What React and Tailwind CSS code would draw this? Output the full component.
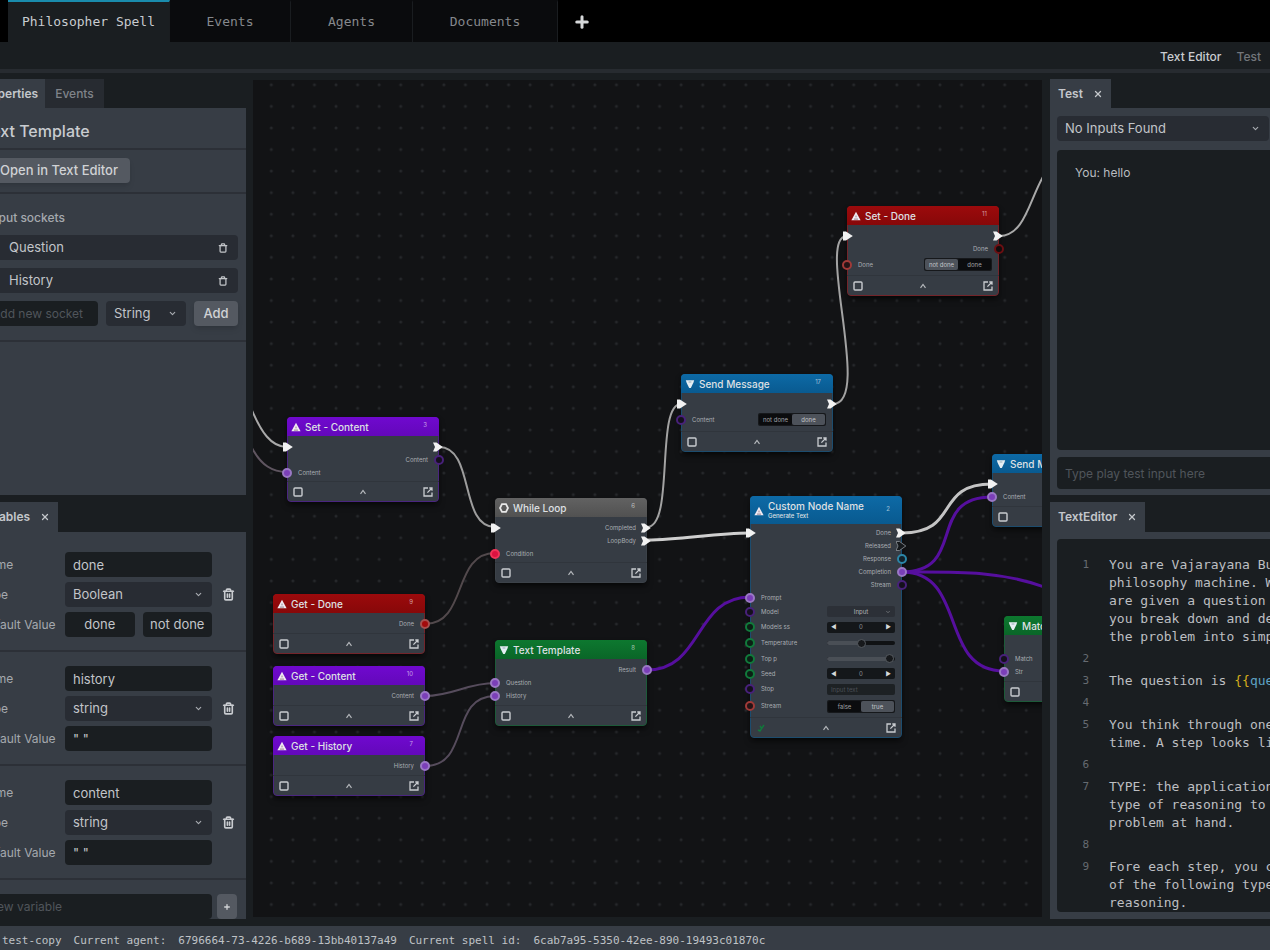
import React, { useState } from 'react';
import { ChevronDown, Plus, Trash, Trash2, X } from 'lucide-react';

const headerColors = {
  purple: 'bg-linear-to-b from-[#7009cf] to-[#6308ba]',
  red: 'bg-linear-to-b from-[#9c0a0c] to-[#870809]',
  grey: 'bg-linear-to-b from-[#626262] to-[#515151]',
  blue: 'bg-linear-to-b from-[#0d6aa6] to-[#095a90]',
  green: 'bg-linear-to-b from-[#0d782f] to-[#0a6628]'
};

const borderColors = {
  purple: 'border-[#4a2580]',
  red: 'border-[#74242a]',
  grey: 'border-[#3c4249]',
  blue: 'border-[#1c4c6e]',
  green: 'border-[#1d5a39]'
};

const socketColors = {
  string: 'border-[#9a78c4] bg-[#7b3fb8]',
  stringEmpty: 'border-[#48217a] bg-[#14101c]',
  bool: 'border-[#a5504f] bg-[#a30a0c]',
  boolOpen: 'border-[#a03a38] bg-[#241416]',
  boolEmpty: 'border-[#6c0f12] bg-[#120c0d]',
  condition: 'border-[#ef3358] bg-[#dc1240]',
  number: 'border-[#117a3b] bg-[#0c1f15]',
  object: 'border-[#2b86a8] bg-[#12222b]'
};

// x / y are positions on the free canvas
const nodes = [
  {
    id: 'set-content', x: 34, y: 337, color: 'purple', icon: 'up', title: 'Set - Content', badge: '3', pad: 'pb-0.5',
    rows: [{ inT: true, outT: true }, { out: 'Content', outS: 'stringEmpty' }, { in: 'Content', inS: 'string' }]
  },
  {
    id: 'while', x: 242, y: 418, color: 'grey', icon: 'ring', title: 'While Loop', badge: '6', pad: 'pb-0.5',
    rows: [{ inT: true, out: 'Completed', outT: true }, { out: 'LoopBody', outT: true }, { in: 'Condition', inS: 'condition' }]
  },
  {
    id: 'send-message', x: 428, y: 294, color: 'blue', icon: 'down', title: 'Send Message', badge: '17', pad: 'pb-0.5',
    rows: [{ inT: true, outT: true }, { in: 'Content', inS: 'stringEmpty', h: 'h-[19px]', toggle: ['not done', 'done'], on: 1 }]
  },
  {
    id: 'set-done', x: 594, y: 126, color: 'red', icon: 'up', title: 'Set - Done', badge: '11', pad: 'pb-px',
    rows: [
      { inT: true, outT: true },
      { out: 'Done', outS: 'boolEmpty' },
      { in: 'Done', inS: 'boolOpen', h: 'h-[19px]', toggle: ['not done', 'done'], on: 0 }
    ]
  },
  {
    id: 'get-done', x: 20, y: 514, color: 'red', icon: 'up', title: 'Get - Done', badge: '9', pad: 'pb-[3px]',
    rows: [{ out: 'Done', outS: 'bool' }]
  },
  {
    id: 'get-content', x: 20, y: 586, color: 'purple', icon: 'up', title: 'Get - Content', badge: '10', pad: 'pb-[3px]',
    rows: [{ out: 'Content', outS: 'string' }]
  },
  {
    id: 'get-history', x: 20, y: 656, color: 'purple', icon: 'up', title: 'Get - History', badge: '7', pad: 'pb-[3px]',
    rows: [{ out: 'History', outS: 'string' }]
  },
  {
    id: 'text-template', x: 242, y: 560, color: 'green', icon: 'down', title: 'Text Template', badge: '8', pad: 'pb-[3px]',
    rows: [{ out: 'Result', outS: 'string' }, { in: 'Question', inS: 'string' }, { in: 'History', inS: 'string' }]
  },
  {
    id: 'custom', x: 497, y: 416, color: 'blue', icon: 'up', title: 'Custom Node Name', subtitle: 'Generate Text', badge: '2',
    pad: 'pb-0.5', done: true,
    rows: [
      { inT: true, out: 'Done', outT: true },
      { out: 'Released', outEmptyT: true },
      { out: 'Response', outS: 'object' },
      { out: 'Completion', outS: 'string' },
      { out: 'Stream', outS: 'stringEmpty' },
      { in: 'Prompt', inS: 'string' },
      { in: 'Model', inS: 'stringEmpty', h: 'h-[15px]', field: 'select' },
      { in: 'Models ss', inS: 'number', h: 'h-4', field: 'stepper' },
      { in: 'Temperature', inS: 'number', h: 'h-4', field: 'slider', value: 50 },
      { in: 'Top p', inS: 'number', h: 'h-[15px]', field: 'slider', value: 98 },
      { in: 'Seed', inS: 'number', h: 'h-[15px]', field: 'stepper' },
      { in: 'Stop', inS: 'stringEmpty', h: 'h-4', field: 'text' },
      { in: 'Stream', inS: 'boolOpen', h: 'h-[18px]', toggle: ['false', 'true'], on: 1 }
    ]
  },
  {
    id: 'send-message-2', x: 739, y: 374, color: 'blue', icon: 'down', title: 'Send Message', badge: '4', pad: 'pb-[3px]',
    rows: [{ inT: true, outT: true }, { in: 'Content', inS: 'string' }]
  },
  {
    id: 'match', x: 751, y: 536, color: 'green', icon: 'down', title: 'Match', badge: '5', pad: 'pb-[3px]',
    rows: [{}, { in: 'Match', inS: 'stringEmpty' }, { in: 'Str', inS: 'string' }]
  }
];

const wires = [
  { d: 'M-2 328 C8 352 18 367 34 367', c: '#a9a9a9', w: 2 },
  { d: 'M-2 366 C8 386 20 392 34 392', c: '#5f5560', w: 2 },
  { d: 'M186 367 C222 367 206 447 242 447', c: '#9d9d9d', w: 2 },
  { d: 'M394 447 C422 447 402 324 428 324', c: '#a3a3a3', w: 2 },
  { d: 'M394 460 C430 460 460 453 497 453', c: '#cfcfcf', w: 3 },
  { d: 'M580 324 C620 324 562 156 594 156', c: '#a3a3a3', w: 2 },
  { d: 'M746 156 C772 156 776 120 791 95', c: '#a9a9a9', w: 2 },
  { d: 'M172 544 C215 544 199 473 242 473', c: '#52494c', w: 2 },
  { d: 'M172 616 C200 616 214 603 242 603', c: '#564c5c', w: 2 },
  { d: 'M172 686 C218 686 196 616 242 616', c: '#564c5c', w: 2 },
  { d: 'M394 590 C450 590 441 517 497 517', c: '#560f9e', w: 3 },
  { d: 'M649 453 C708 453 680 404 739 404', c: '#c4c4c4', w: 3 },
  { d: 'M649 492 C715 492 672 417 739 417', c: '#560f9e', w: 3 },
  { d: 'M649 492 C700 492 745 490 791 507', c: '#560f9e', w: 3 },
  { d: 'M649 492 C715 492 685 591 751 591', c: '#560f9e', w: 3 }
];

const editorLines = [
  ['You are Vajarayana Buddhist', 'philosophy machine. When you', 'are given a question or task', 'you break down and decompose', 'the problem into simple steps'],
  [''],
  ['question'],
  [''],
  ['You think through one step at a', 'time. A step looks like this:'],
  [''],
  ['TYPE: the application of one', 'type of reasoning to the', 'problem at hand.'],
  [''],
  ['Fore each step, you can use one', 'of the following types of', 'reasoning.']
];

function Trigger({ side, empty }) {
  return (
    <svg
      viewBox="0 0 10 10"
      className={side === 'in' ? 'absolute top-1/2 -left-1 size-[10px] -translate-y-1/2' : 'absolute top-1/2 -right-1 size-[10px] -translate-y-1/2'}
    >
      <path
        d={side === 'in' ? 'M0 0.5 L3 0.5 L9.8 5 L3 9.5 L0 9.5 Z' : 'M0 0.5 L3.5 0.5 L9.8 5 L3.5 9.5 L0 9.5 L2 5 Z'}
        fill={empty ? '#16191c' : '#f2f2f2'}
        stroke={empty ? '#777c82' : 'none'}
      />
    </svg>
  );
}

function Socket({ side, type }) {
  return (
    <span
      className={`absolute top-1/2 size-[10px] -translate-y-1/2 rounded-full border-2 ${side === 'in' ? '-left-[5px]' : '-right-[5px]'} ${socketColors[type]}`}
    />
  );
}

function NodeIcon({ type }) {
  if (type === 'ring') {
    return (
      <svg viewBox="0 0 10 10" className="size-[10px] shrink-0" fill="none" stroke="#e8e8e8" strokeWidth="1.8">
        <path d="M3 1.2 H7 L9 5 L7 8.8 H3 L1 5 Z" />
      </svg>
    );
  }
  if (type === 'down') {
    return (
      <svg viewBox="0 0 10 10" className="size-[10px] shrink-0">
        <path d="M0.8 1.2 H9.2 L8.4 3.8 L5.8 9 H4.2 L1.6 3.8 Z" fill="#e4eef3" />
        <path d="M3.6 3 H6.4" stroke="#7f98a2" strokeWidth="0.8" />
      </svg>
    );
  }
  return (
    <svg viewBox="0 0 10 10" className="size-[10px] shrink-0">
      <path d="M5 0.8 L9.6 9.2 H0.4 Z" fill="#f0eaf2" />
      <path d="M5 4.6 V6.4 M3 8.1 H7" stroke="#8d7580" strokeWidth="0.9" />
    </svg>
  );
}

function Field({ row }) {
  if (row.toggle) {
    return (
      <div className="ml-auto flex h-[13px] w-[68px] rounded-xs bg-[#16181b] p-px">
        {row.toggle.map((t, i) => (
          <button key={t} className={`flex-1 rounded-xs text-[6px] leading-[11px] ${row.on === i ? 'bg-[#4d525a] text-[#c3c6ca]' : 'bg-[#0b0c0e] text-[#a0a3a7]'}`}>
            {t}
          </button>
        ))}
      </div>
    );
  }
  if (row.field === 'select') {
    return (
      <div className="relative ml-auto h-[11px] w-[68px]">
        <select aria-label={row.in} className="block h-full w-full appearance-none rounded-xs bg-[#2c3037] text-center text-[6px] text-[#b0b3b8]">
          <option>Input</option>
        </select>
        <ChevronDown className="pointer-events-none absolute top-[3px] right-1 size-[6px] text-[#a0a3a7]" />
      </div>
    );
  }
  if (row.field === 'stepper') {
    return (
      <div className="ml-auto flex h-[11px] w-[68px] items-center justify-between rounded-xs bg-[#14171a] px-1 text-[6px] leading-none text-[#d6d8da]">
        <button aria-label="Decrease">◀</button>
        <span className="text-[#8b8f94]">0</span>
        <button aria-label="Increase">▶</button>
      </div>
    );
  }
  if (row.field === 'slider') {
    return (
      <div className="relative ml-auto flex h-[10px] w-[68px] items-center">
        <div className="h-1 w-full rounded-xs bg-[#101214]">
          <div className="h-1 rounded-xs bg-[#4a4f56]" style={{ width: `${row.value}%` }} />
        </div>
        <input
          type="range"
          aria-label={row.in}
          defaultValue={row.value}
          className="absolute inset-0 h-full w-full appearance-none bg-transparent [&::-webkit-slider-thumb]:size-[9px] [&::-webkit-slider-thumb]:appearance-none [&::-webkit-slider-thumb]:rounded-full [&::-webkit-slider-thumb]:border [&::-webkit-slider-thumb]:border-[#555a60] [&::-webkit-slider-thumb]:bg-[#17191c]"
        />
      </div>
    );
  }
  if (row.field === 'text') {
    return (
      <input
        aria-label={row.in}
        placeholder="Input text"
        className="ml-auto h-[11px] w-[68px] rounded-xs bg-[#1d2124] px-1 text-[6px] placeholder:text-[#4b5056]"
      />
    );
  }
  return null;
}

function GraphNode({ node }) {
  return (
    <section
      className={`absolute flex w-[152px] flex-col rounded-sm border bg-[#363c44] shadow-md shadow-black/50 ${borderColors[node.color]}`}
      style={{ left: node.x, top: node.y }}
    >
      <header className={`-mx-px -mt-px flex items-center gap-1 rounded-t-sm px-1 pt-px ${node.subtitle ? 'h-7' : 'h-[19px]'} ${headerColors[node.color]}`}>
        <NodeIcon type={node.icon} />
        <div className="min-w-0 flex-1 text-[10px] leading-[11px] font-medium whitespace-nowrap text-[#dfe0e4]">
          {node.title}
          {node.subtitle && <div className="text-[6px] leading-[8px]">{node.subtitle}</div>}
        </div>
        <span className="mr-2 mb-1 text-[6px] leading-none text-white/60">{node.badge}</span>
      </header>
      <div className={`-mx-px ${node.subtitle ? 'pt-0.5' : 'pt-1'} ${node.pad}`}>
        {node.rows.map((row, i) => (
          <div key={i} className={`relative flex items-center px-[7px] text-[6px] leading-none text-[#a9adb2] ${row.h || 'h-[13px]'}`}>
            {row.inT && <Trigger side="in" />}
            {row.inS && <Socket side="in" type={row.inS} />}
            {row.in && <span className="pl-1">{row.in}</span>}
            <Field row={row} />
            {row.out && <span className="ml-auto pr-1">{row.out}</span>}
            {(row.outT || row.outEmptyT) && <Trigger side="out" empty={row.outEmptyT} />}
            {row.outS && <Socket side="out" type={row.outS} />}
          </div>
        ))}
      </div>
      <footer className="-mx-px -mb-px flex h-[21px] items-center justify-between border-t border-[#30353c] px-[6px]">
        <svg viewBox="0 0 10 10" className="size-[10px]" fill="none" stroke="#c9ccd0" strokeWidth="1.4">
          {node.done ? (
            <path d="M2 7 L4 8 L8 2 M6 6 L4 3" stroke="#117a3b" />
          ) : (
            <rect x="1" y="1" width="8" height="8" rx="1" />
          )}
        </svg>
        <svg viewBox="0 0 8 8" className="size-2" fill="none" stroke="#b5b8bc" strokeWidth="1.2">
          <path d="M1.5 5.8 L4 2.5 L6.5 5.8" />
        </svg>
        <svg viewBox="0 0 10 10" className="size-[10px]" fill="none" stroke="#c9ccd0" strokeWidth="1.3">
          <path d="M5 1 H1 V9 H9 V5.4 M6.3 1 H9 V3.8 M9 1 L4.4 5.6" />
        </svg>
      </footer>
    </section>
  );
}

function Canvas() {
  return (
    <main className="relative mt-[7px] mb-[9px] min-w-0 flex-1 overflow-hidden bg-[#121315]">
      <svg className="absolute inset-0 h-full w-full" fill="none">
        <defs>
          <pattern id="dots" x="7.5" y="-6" width="21.57" height="21.57" patternUnits="userSpaceOnUse">
            <circle cx="10.8" cy="10.8" r="1.5" fill="#26282b" />
          </pattern>
        </defs>
        <rect width="100%" height="100%" fill="url(#dots)" />
        {wires.map((wire) => (
          <path key={wire.d} d={wire.d} stroke={wire.c} strokeWidth={wire.w} />
        ))}
      </svg>
      {nodes.map((node) => (
        <GraphNode key={node.id} node={node} />
      ))}
    </main>
  );
}

function PanelTab({ children, closable, active = true, className = '' }) {
  return (
    <button
      className={`flex h-full items-center gap-[10px] text-[12px] ${active ? 'bg-[#373d45] font-semibold text-[#c4c7cb]' : 'bg-[#272b31] font-medium text-[#7f8389]'} ${className}`}
    >
      {children}
      {closable && <X className="size-[10px]" strokeWidth={3} />}
    </button>
  );
}

function Dropdown({ label, value, options, className = '' }) {
  return (
    <div className={`relative h-[25px] ${className}`}>
      <select
        aria-label={label}
        defaultValue={value}
        className="block h-full w-full appearance-none rounded bg-[#282c33] px-2 text-[13px] text-[#c2c5c9]"
      >
        {options.map((o) => (
          <option key={o}>{o}</option>
        ))}
      </select>
      <ChevronDown className="pointer-events-none absolute top-2 right-[9px] size-[9px] text-[#a9adb2]" strokeWidth={3} />
    </div>
  );
}

function Properties() {
  const [sockets, setSockets] = useState(['Question', 'History']);
  const [name, setName] = useState('');

  const addSocket = () => {
    if (!name) return;
    setSockets([...sockets, name]);
    setName('');
  };

  return (
    <div className="min-h-0 flex-1 overflow-hidden bg-[#373d45]">
      <h2 className="border-b-2 border-[#2c3037] pt-3 pb-[5px] pl-[14px] text-[16px] leading-[23px] font-medium text-[#c9ccd0]">Text Template</h2>
      <div className="border-b-2 border-[#2c3037] pt-2 pb-[9px] pl-5">
        <button className="block h-[25px] rounded-sm bg-[#545961] px-3 text-[13px] font-medium text-[#d0d2d5] shadow-md">Open in Text Editor</button>
      </div>
      <div className="border-b-2 border-[#2c3037] pt-[17px] pr-2 pb-[14px] pl-5">
        <h3 className="mb-[10px] text-[12px] leading-[14px] font-medium text-[#a5a9ae]">Input sockets</h3>
        <div className="flex flex-col gap-2">
          {sockets.map((s) => (
            <div key={s} className="flex h-[25px] items-center justify-between rounded bg-[#282c33] pr-[10px] pl-[21px] text-[13px] text-[#c2c5c9]">
              {s}
              <button aria-label={`Delete ${s}`} onClick={() => setSockets(sockets.filter((x) => x !== s))}>
                <Trash className="size-[10px]" strokeWidth={3} />
              </button>
            </div>
          ))}
          <div className="flex gap-2">
            <input
              aria-label="Add new socket"
              placeholder="Add new socket"
              value={name}
              onChange={(e) => setName(e.target.value)}
              className="h-[25px] min-w-0 flex-1 rounded bg-[#1a1e21] pl-1 text-[12px] text-[#c2c5c9] placeholder:text-[#50555b]"
            />
            <Dropdown label="Socket type" value="String" options={['String', 'Number', 'Boolean']} className="w-20" />
            <button onClick={addSocket} className="h-[25px] w-[44px] rounded-sm bg-[#545961] text-[13px] font-medium text-[#d0d2d5] shadow-md">
              Add
            </button>
          </div>
        </div>
      </div>
    </div>
  );
}

function Variable({ id, name, type, className = '' }) {
  const labelStyle = 'flex w-[85px] shrink-0 items-center pl-3 text-[12px] whitespace-nowrap text-[#a5a9ae]';
  const inputStyle = 'h-[25px] w-full rounded bg-[#1a1e21] px-2 text-[13px] text-[#c2c5c9]';
  return (
    <div className={`flex items-center border-b-2 border-[#2c3037] pb-[13px] ${className}`}>
      <div className="flex w-[244px] flex-col gap-[5px]">
        <div className="flex gap-3">
          <label htmlFor={`${id}-name`} className={labelStyle}>Name</label>
          <input id={`${id}-name`} defaultValue={name} className={inputStyle} />
        </div>
        <div className="flex gap-3">
          <span className={labelStyle}>Type</span>
          <Dropdown label={`${name} type`} value={type} options={['Boolean', 'string', 'number']} className="flex-1" />
        </div>
        <div className="flex gap-3">
          <label htmlFor={`${id}-value`} className={labelStyle}>Default Value</label>
          {type === 'Boolean' ? (
            <div className="flex flex-1 gap-2">
              <button id={`${id}-value`} className="h-[25px] flex-1 rounded bg-[#1a1e21] text-[13px] text-[#c2c5c9]">done</button>
              <button className="h-[25px] flex-1 rounded bg-[#1a1e21] text-[13px] whitespace-nowrap text-[#c2c5c9]">not done</button>
            </div>
          ) : (
            <input id={`${id}-value`} defaultValue={'" "'} className={inputStyle} />
          )}
        </div>
      </div>
      <button aria-label={`Delete ${name}`} className="ml-[10px] text-[#c9ccd0]">
        <Trash2 className="size-[13px]" strokeWidth={3} />
      </button>
    </div>
  );
}

function LeftColumn() {
  return (
    <aside className="w-[246px] shrink-0 overflow-hidden pt-[6px] pb-[7px]">
      <div className="-ml-8 flex h-full w-[278px] flex-col">
        <div className="flex h-[29px] shrink-0">
          <PanelTab className="pr-[7px] pl-[10px]">Properties</PanelTab>
          <PanelTab active={false} className="px-[10px]">Events</PanelTab>
        </div>
        <Properties />
        <div className="mt-[7px] flex h-[30px] shrink-0">
          <PanelTab closable className="px-2">Variables</PanelTab>
        </div>
        <div className="min-h-0 flex-1 overflow-hidden bg-[#373d45]">
          <Variable id="v1" name="done" type="Boolean" className="pt-5" />
          <Variable id="v2" name="history" type="string" className="pt-[14px]" />
          <Variable id="v3" name="content" type="string" className="pt-[14px]" />
          <div className="flex gap-[5px] pt-[14px] pr-[9px] pl-3">
            <input
              aria-label="New variable"
              placeholder="New variable"
              className="h-[25px] min-w-0 flex-1 rounded bg-[#1a1e21] pl-2 text-[12px] text-[#c2c5c9] placeholder:text-[#50555b]"
            />
            <button aria-label="Add variable" className="flex h-[25px] w-5 items-center justify-center rounded-sm bg-[#545961] text-[#d0d2d5]">
              <Plus className="size-2" strokeWidth={4} />
            </button>
          </div>
        </div>
      </div>
    </aside>
  );
}

function RightColumn() {
  return (
    <aside className="flex w-[220px] shrink-0 flex-col overflow-hidden pt-[6px] pb-[7px]">
      <div className="flex h-[29px] shrink-0">
        <PanelTab closable className="px-2">Test</PanelTab>
      </div>
      <div className="flex min-h-0 flex-1 flex-col bg-[#373d45] pt-2 pb-[6px] pl-[7px]">
        <Dropdown label="Inputs" value="No Inputs Found" options={['No Inputs Found']} className="mr-px" />
        <div className="mt-[9px] min-h-0 flex-1 rounded-l-sm bg-[#1a1e21] px-[18px] py-[14px] text-[12px] leading-[18px] text-[#b9bcc0]">You: hello</div>
        <input
          aria-label="Play test input"
          placeholder="Type play test input here"
          className="mt-[7px] h-8 rounded-l bg-[#1a1e21] px-2 text-[12px] text-[#c2c5c9] placeholder:text-[#50555b]"
        />
      </div>
      <div className="mt-[7px] flex h-[30px] shrink-0">
        <PanelTab closable className="px-2">TextEditor</PanelTab>
      </div>
      <div className="flex min-h-0 flex-1 bg-[#373d45] pt-[7px] pb-[7px] pl-[7px]">
        <div className="flex min-w-0 flex-1 flex-col gap-1 overflow-hidden rounded-l-sm bg-[#1a1e21] pt-[17px] font-['DejaVu_Sans_Mono',monospace] text-[13px] leading-[18px] whitespace-pre text-[#bdbfc2]">
          {editorLines.map((lines, i) => (
            <div key={i} className="flex gap-5">
              <span className="w-8 shrink-0 text-right text-[11px] text-[#666b71]">{i + 1}</span>
              {i === 2 ? (
                <div>
                  The question is <span className="text-[#d4ad1c]">{'{{'}</span>
                  <span className="text-[#5fa3c4]">question</span>
                  <span className="text-[#d4ad1c]">{'}}'}</span>
                </div>
              ) : (
                <div>
                  {lines.map((l, j) => (
                    <div key={j}>{l || ' '}</div>
                  ))}
                </div>
              )}
            </div>
          ))}
        </div>
      </div>
    </aside>
  );
}

export default function App() {
  const [tab, setTab] = useState('Philosopher Spell');
  const tabs = [
    { name: 'Philosopher Spell', width: 'w-[162px]' },
    { name: 'Events', width: 'w-[121px]' },
    { name: 'Agents', width: 'w-[122px]' },
    { name: 'Documents', width: 'w-[145px]' }
  ];

  return (
    <div className="flex h-screen flex-col overflow-hidden bg-[#1a1e21] font-[Inter,sans-serif]">
      <nav className="flex h-[42px] shrink-0 bg-black pl-2 font-['DejaVu_Sans_Mono',monospace] text-[13px]">
        {tabs.map((t) => (
          <button
            key={t.name}
            onClick={() => setTab(t.name)}
            className={`border-t-2 border-r border-r-[#1a1d20] whitespace-nowrap ${t.width} ${tab === t.name ? 'border-t-[#1a8cad] bg-[#1a1e21] text-[#c9ccd0]' : 'border-t-transparent bg-[#0a0b0d] text-[#85888c]'}`}
          >
            {t.name}
          </button>
        ))}
        <button aria-label="New tab" className="px-[15px] pt-0.5 text-[#d6d8da]">
          <Plus className="size-[18px]" strokeWidth={4} />
        </button>
      </nav>
      <div className="flex h-[31px] shrink-0 items-center justify-end gap-[15px] border-b-4 border-[#272b30] pt-0.5 pr-[9px] text-[12px] font-medium">
        <a href="#editor" className="text-[#c9ccd0]">Text Editor</a>
        <a href="#test" className="text-[#72767b]">Test</a>
      </div>
      <div className="flex min-h-0 flex-1">
        <LeftColumn />
        <div className="w-[7px] shrink-0" />
        <Canvas />
        <div className="w-2 shrink-0" />
        <RightColumn />
      </div>
      <footer className="flex h-6 shrink-0 items-center gap-3 bg-[#373d45] pt-1.5 pl-0.5 font-['DejaVu_Sans_Mono',monospace] text-[11px] whitespace-nowrap text-[#bfc2c6]">
        <span>test-copy</span>
        <span>Current agent:</span>
        <span>6796664-73-4226-b689-13bb40137a49</span>
        <span>Current spell id:</span>
        <span>6cab7a95-5350-42ee-890-19493c01870c</span>
      </footer>
    </div>
  );
}
